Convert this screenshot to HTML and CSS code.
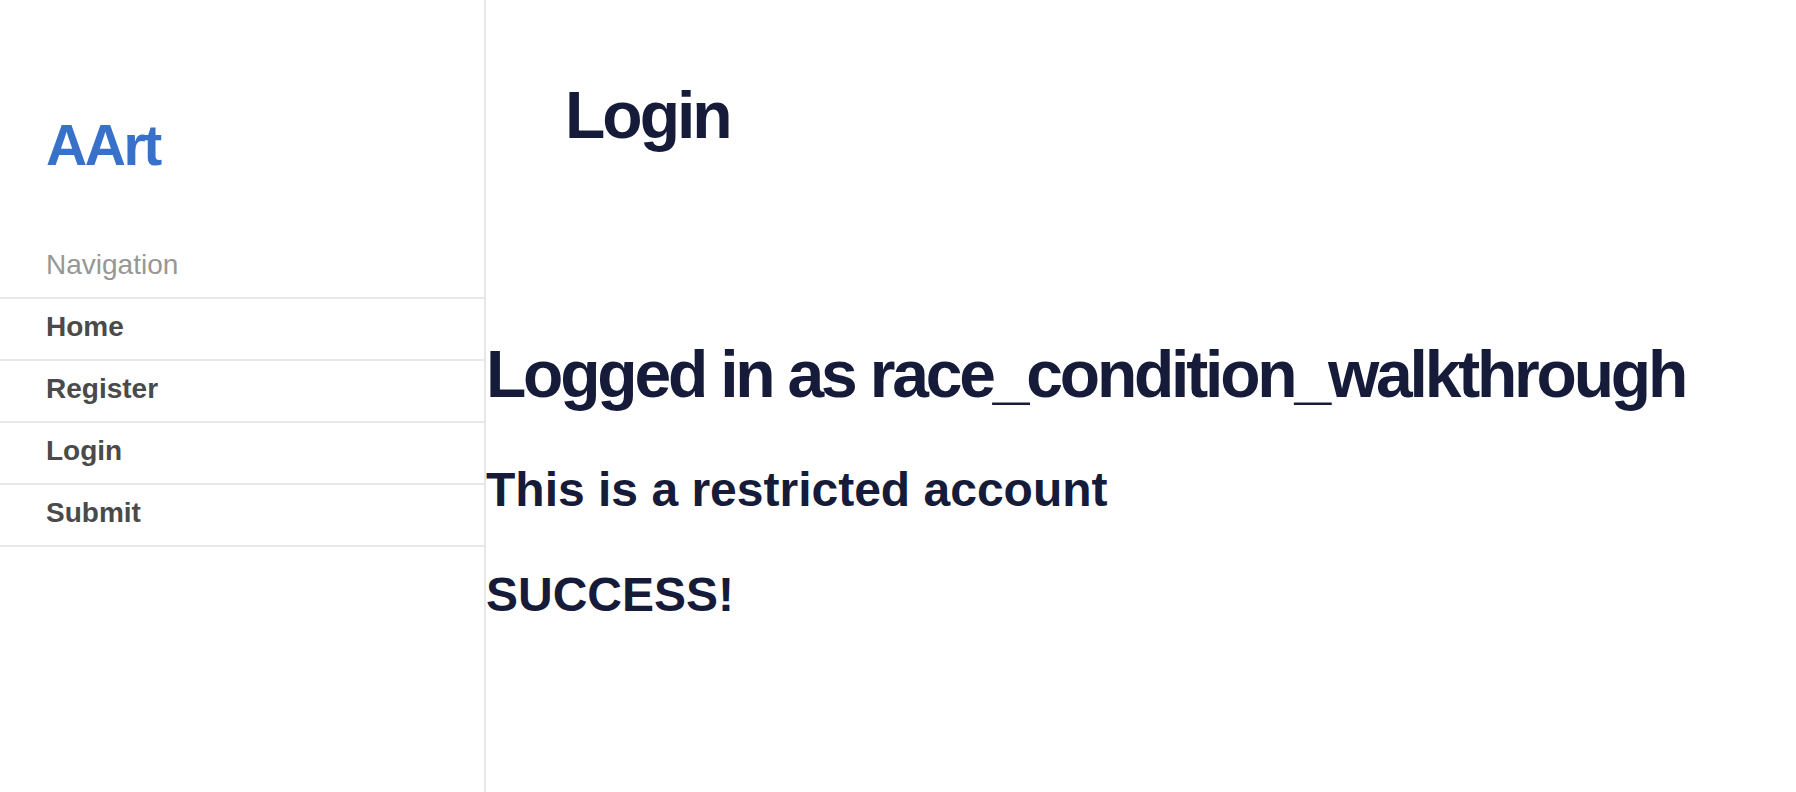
FILE: index.html
```html
<!DOCTYPE html>
<html lang="en">
<head>
<meta charset="utf-8">
<title>Login</title>
<link rel="stylesheet" href="styles.css">
</head>
<body>
<div class="layout">
  <aside class="sidebar">
    <div class="logo">AArt</div>
    <div class="nav-label">Navigation</div>
    <ul class="nav">
      <li><a href="#">Home</a></li>
      <li><a href="#">Register</a></li>
      <li><a href="#">Login</a></li>
      <li><a href="#">Submit</a></li>
    </ul>
  </aside>
  <main class="main">
    <div class="page-title">Login</div>
    <h1 class="status">Logged in as race_condition_walkthrough</h1>
    <h2 class="note">This is a restricted account</h2>
    <h3 class="result">SUCCESS!</h3>
  </main>
</div>
</body>
</html>
```
FILE: styles.css
```css
html, body {
  margin: 0;
  padding: 0;
  background: #ffffff;
}
body {
  font-family: "Liberation Sans", Arial, Helvetica, sans-serif;
}
.layout {
  display: flex;
  min-height: 792px;
}
.sidebar {
  width: 484px;
  flex: 0 0 484px;
  border-right: 2px solid #e8e8e8;
}
.logo {
  margin: 112px 0 0 46px;
  font-size: 57px;
  line-height: 66px;
  font-weight: 700;
  letter-spacing: -2.4px;
  color: #3871c9;
}
.nav-label {
  margin-top: 71px;
  padding: 0 46px 16px;
  font-size: 28px;
  line-height: 32px;
  color: #979797;
}
.nav {
  list-style: none;
  margin: 0;
  padding: 0;
  border-top: 2px solid #e8e8e8;
}
.nav li {
  border-bottom: 2px solid #e8e8e8;
}
.nav a {
  display: block;
  padding: 12px 46px 16px;
  font-size: 28px;
  line-height: 32px;
  font-weight: 700;
  color: #4a4a4a;
  text-decoration: none;
}
.main {
  flex: 1;
  color: #151b39;
}
.page-title {
  margin: 77px 0 0 79px;
  font-size: 66px;
  line-height: 76px;
  font-weight: 700;
  letter-spacing: -3px;
}
.status {
  margin: 183px 0 0;
  font-size: 66px;
  line-height: 76px;
  font-weight: 700;
  letter-spacing: -3.2px;
}
.note {
  margin: 50px 0 0;
  font-size: 48px;
  line-height: 56px;
  font-weight: 700;
}
.result {
  margin: 50px 0 0;
  font-size: 48px;
  line-height: 54px;
  font-weight: 700;
}
```
